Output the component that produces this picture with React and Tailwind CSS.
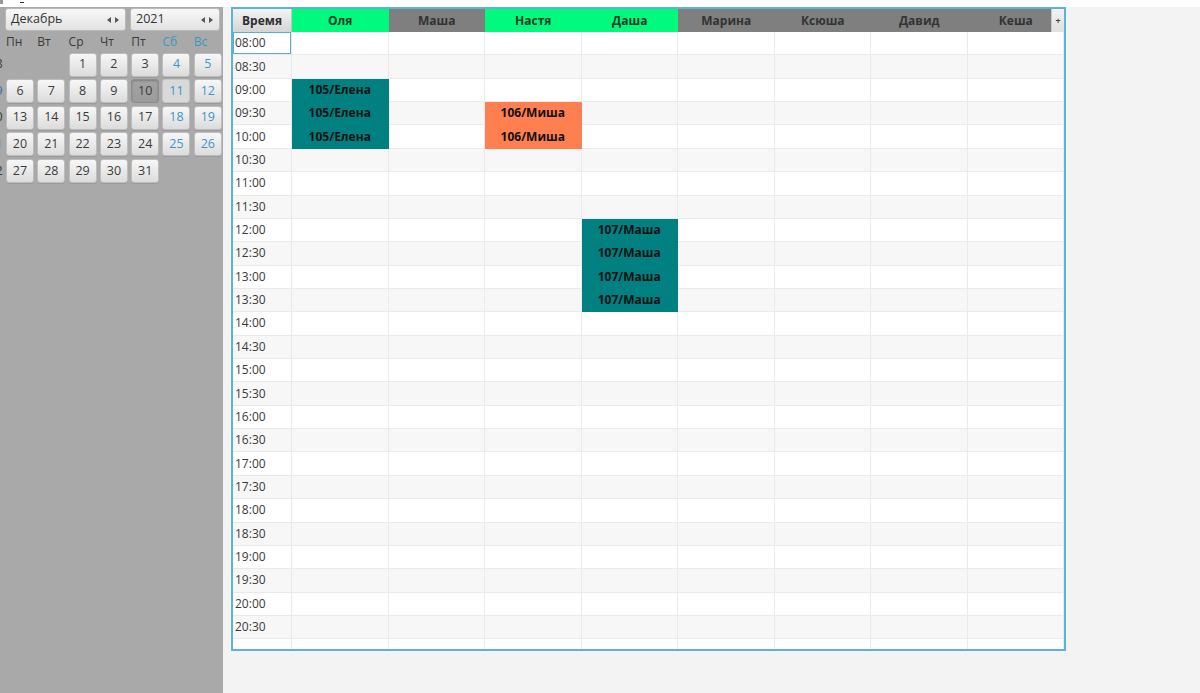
import React from 'react'

const STAFF = [
  { name: 'Оля', on: true },
  { name: 'Маша', on: false },
  { name: 'Настя', on: true },
  { name: 'Даша', on: true },
  { name: 'Марина', on: false },
  { name: 'Ксюша', on: false },
  { name: 'Давид', on: false },
  { name: 'Кеша', on: false },
]

const TIMES = []
for (let h = 8; h <= 20; h++) {
  const hh = String(h).padStart(2, '0')
  TIMES.push(`${hh}:00`, `${hh}:30`)
}

// bookings: column index -> { rowIndex: color, label }
const BOOKINGS = {
  0: { 2: 'teal', 3: 'teal', 4: 'teal', label: '105/Елена' },
  2: { 3: 'coral', 4: 'coral', label: '106/Миша' },
  3: { 8: 'teal', 9: 'teal', 10: 'teal', 11: 'teal', label: '107/Маша' },
}

const WEEKS = [
  { no: '48', days: [null, null, 1, 2, 3, 4, 5] },
  { no: '49', days: [6, 7, 8, 9, 10, 11, 12] },
  { no: '50', days: [13, 14, 15, 16, 17, 18, 19] },
  { no: '51', days: [20, 21, 22, 23, 24, 25, 26] },
  { no: '52', days: [27, 28, 29, 30, 31, null, null] },
]

const DOW = ['Пн', 'Вт', 'Ср', 'Чт', 'Пт', 'Сб', 'Вс']

function Arrows() {
  return (
    <span className="flex items-center gap-[4px]">
      <svg width="4" height="6" viewBox="0 0 4 6"><path d="M4 0 L0 3 L4 6 Z" fill="#555" /></svg>
      <svg width="4" height="6" viewBox="0 0 4 6"><path d="M0 0 L4 3 L0 6 Z" fill="#555" /></svg>
    </span>
  )
}

function Spinner({ value, width }) {
  return (
    <div className={`${width} h-[23px] flex items-center justify-between pl-[5px] pr-[6px] rounded-[3px] border border-[#b9b9b9] bg-gradient-to-b from-[#f8f8f8] to-[#e2e2e2] text-[12.5px] text-[#333]`}>
      <span>{value}</span>
      <Arrows />
    </div>
  )
}

function DayButton({ day, col }) {
  if (day == null) return <div />
  const weekend = col >= 5
  let look = 'border-[#bdbdbd] bg-gradient-to-b from-[#f7f7f7] to-[#dcdcdc] shadow-[0_1px_0_#9a9a9a]'
  if (day === 10) look = 'border-[#8c8c8c] bg-gradient-to-b from-[#a3a3a3] to-[#9c9c9c] shadow-[inset_0_1px_2px_#7d7d7d]'
  if (day === 11) look = 'border-[#c4c4c4] bg-[#d9d9d9] shadow-[0_1px_0_#9a9a9a]'
  return (
    <div className={`h-[24px] flex items-center justify-center rounded-[3px] border text-[12.5px] ${look} ${weekend ? 'text-[#3a98c6]' : 'text-[#3a3a3a]'}`}>
      {day}
    </div>
  )
}

function Calendar() {
  return (
    <aside className="w-[223px] bg-[#a9a9a9] overflow-hidden pt-[1px]">
      <div className="flex gap-[4px] pl-[5px]">
        <Spinner value="Декабрь" width="w-[121px]" />
        <Spinner value="2021" width="w-[90px]" />
      </div>
      <div className="ml-[-25.3px] mt-[3px] grid grid-cols-[repeat(8,28px)] gap-x-[3.3px] gap-y-[2.6px]">
        <div />
        {DOW.map((d, i) => (
          <div key={d} className={`h-[16px] leading-[16px] text-[12px] ${i >= 5 ? 'text-[#3a98c6]' : 'text-[#3a3a3a]'}`}>
            {d}
          </div>
        ))}
        {WEEKS.map((w, wi) => (
          <React.Fragment key={w.no}>
            <div className={`h-[24px] flex items-center justify-end text-[12.5px] ${wi % 2 ? 'text-[#3a6fa0]' : 'text-[#3a3a3a]'}`}>
              {w.no}
            </div>
            {w.days.map((d, ci) => (
              <DayButton key={ci} day={d} col={ci} />
            ))}
          </React.Fragment>
        ))}
      </div>
    </aside>
  )
}

function HeaderRow() {
  return (
    <div className="relative flex h-[23px] shrink-0">
      <div className="w-[59px] shrink-0 flex items-center justify-center border-r border-[#c6c6c6] bg-gradient-to-b from-[#f3f3f3] to-[#d5d5d5] text-[12px] font-bold text-[#2e2e2e]">
        Время
      </div>
      {STAFF.map((s) => (
        <div
          key={s.name}
          className={`flex-1 flex items-center justify-center text-[12px] font-bold ${s.on ? 'bg-[#00fa7d] text-[#1f3b2a]' : 'bg-[#7f7f7f] text-[#333]'}`}
        >
          {s.name}
        </div>
      ))}
      {/* column menu button sits over the last header cell */}
      <div className="absolute right-0 top-0 h-full w-[13px] flex items-center justify-center bg-gradient-to-b from-[#f2f2f2] to-[#e0e0e0] border-l border-[#c8c8c8] text-[9px] font-bold text-[#444]">
        +
      </div>
    </div>
  )
}

function BodyRow({ time, index }) {
  const stripe = index % 2 ? 'bg-[#f7f7f7]' : 'bg-white'
  return (
    <div className="flex h-[23.36px] shrink-0">
      <div
        className={`w-[59px] shrink-0 flex items-center pl-[2px] text-[12px] text-[#3a3a3a] border-r border-b border-[#e9e9e9] ${stripe} ${index === 0 ? 'shadow-[inset_0_0_0_1px_#5aaed6]' : ''}`}
      >
        {time}
      </div>
      {STAFF.map((s, ci) => {
        const b = BOOKINGS[ci]
        const color = b && b[index]
        if (color) {
          const fill = color === 'teal' ? 'bg-[#008080] border-[#008080]' : 'bg-[#ff7f50] border-[#ff7f50]'
          return (
            <div key={s.name} className={`flex-1 flex items-center justify-center border-r border-b text-[12px] font-bold text-[#111] ${fill}`}>
              {b.label}
            </div>
          )
        }
        return <div key={s.name} className={`flex-1 border-r border-b border-[#ebebeb] ${stripe}`} />
      })}
    </div>
  )
}

function Schedule() {
  return (
    <div className="w-[835px] h-[644px] border-2 border-[#5ab4d6] bg-white flex flex-col overflow-hidden">
      <HeaderRow />
      {TIMES.map((t, i) => (
        <BodyRow key={t} time={t} index={i} />
      ))}
      <div className="flex flex-1">
        <div className="w-[59px] shrink-0 border-r border-[#e9e9e9]" />
        {STAFF.map((s) => (
          <div key={s.name} className="flex-1 border-r border-[#ebebeb]" />
        ))}
      </div>
    </div>
  )
}

export default function App() {
  return (
    <div className="w-[1200px] h-[693px] flex flex-col bg-white font-['Open_Sans','Noto_Sans',sans-serif] overflow-hidden">
      <div className="h-[7px] shrink-0 flex items-start">
        <span className="w-[3px] h-[4px] bg-[#9a9a9a]" />
        <span className="ml-[17px] mt-[2px] w-[4px] h-[1px] bg-[#333]" />
      </div>
      <div className="flex flex-1">
        <Calendar />
        <main className="flex-1 bg-[#f3f3f3] pl-[8px]">
          <Schedule />
        </main>
      </div>
    </div>
  )
}
